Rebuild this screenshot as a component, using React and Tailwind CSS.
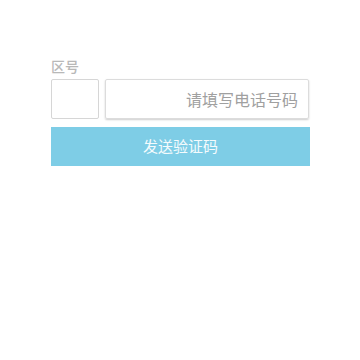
import React from 'react';

const font = { fontFamily: '"Noto Sans CJK SC", "Noto Sans", sans-serif' };

const App = () => {
  return (
    <div className="w-[360px] h-[360px] bg-white pt-[57px] px-[51px]" style={font}>
      <p className="text-[14px] leading-[19px] text-[#b8b8b8] font-medium">区号</p>
      <div className="flex gap-[6px] mt-[3px]">
        <div className="w-[48px] h-[40px] border border-[#d6d6d6] rounded-[2px]" />
        <div className="flex-1 h-[40px] border border-[#dcdcdc] rounded-[2px] shadow-[0_1px_2px_rgba(0,0,0,0.2)] flex items-center justify-end pr-[10px]">
          <span className="text-[16px] text-[#a0a0a0]">请填写电话号码</span>
        </div>
      </div>
      <button className="mt-[8px] w-[259px] h-[39px] bg-[#7ecde6] text-[#f4fbfd] text-[15px] flex items-center justify-center">
        发送验证码
      </button>
    </div>
  );
};

export default App;
